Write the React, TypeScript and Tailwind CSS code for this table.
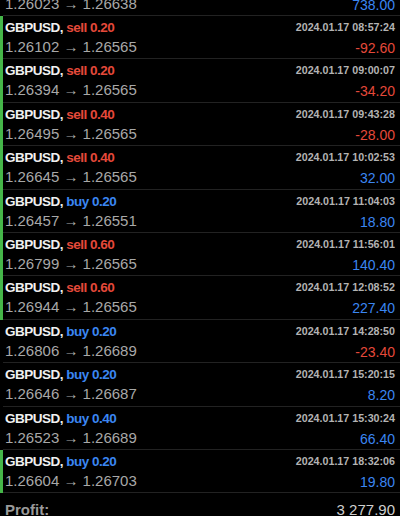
import React from "react";

type Row = {
  side: "buy" | "sell";
  vol: string;
  open: string;
  close: string;
  time: string;
  profit: string;
  green: boolean;
};

const rows: Row[] = [
  { side: "buy", vol: "1.20", open: "1.26023", close: "1.26638", time: "2024.01.17 08:40:11", profit: "738.00", green: false },
  { side: "sell", vol: "0.20", open: "1.26102", close: "1.26565", time: "2024.01.17 08:57:24", profit: "-92.60", green: true },
  { side: "sell", vol: "0.20", open: "1.26394", close: "1.26565", time: "2024.01.17 09:00:07", profit: "-34.20", green: true },
  { side: "sell", vol: "0.40", open: "1.26495", close: "1.26565", time: "2024.01.17 09:43:28", profit: "-28.00", green: true },
  { side: "sell", vol: "0.40", open: "1.26645", close: "1.26565", time: "2024.01.17 10:02:53", profit: "32.00", green: true },
  { side: "buy", vol: "0.20", open: "1.26457", close: "1.26551", time: "2024.01.17 11:04:03", profit: "18.80", green: true },
  { side: "sell", vol: "0.60", open: "1.26799", close: "1.26565", time: "2024.01.17 11:56:01", profit: "140.40", green: true },
  { side: "sell", vol: "0.60", open: "1.26944", close: "1.26565", time: "2024.01.17 12:08:52", profit: "227.40", green: true },
  { side: "buy", vol: "0.20", open: "1.26806", close: "1.26689", time: "2024.01.17 14:28:50", profit: "-23.40", green: false },
  { side: "buy", vol: "0.20", open: "1.26646", close: "1.26687", time: "2024.01.17 15:20:15", profit: "8.20", green: false },
  { side: "buy", vol: "0.40", open: "1.26523", close: "1.26689", time: "2024.01.17 15:30:24", profit: "66.40", green: false },
  { side: "buy", vol: "0.20", open: "1.26604", close: "1.26703", time: "2024.01.17 18:32:06", profit: "19.80", green: true },
];

function TradeRow({ r }: { r: Row }) {
  const sideColor = r.side === "sell" ? "text-[#e5493a]" : "text-[#3b86f2]";
  const profitColor = r.profit.startsWith("-") ? "text-[#e5493a]" : "text-[#3b86f2]";
  return (
    <div className="flex h-[43.4px]">
      <div className={r.green ? "w-[3px] bg-[#45b649]" : "w-[3px]"} />
      <div className="flex flex-1 justify-between border-b border-[#222222] pl-[2px] pr-[5px]">
        <div className="flex flex-col pt-[3px]">
          <div className="h-[18px] text-[13.5px] leading-[18px] font-bold tracking-[-0.5px] whitespace-nowrap">
            <span className="text-[#f0f0f0]">GBPUSD, </span>
            <span className={sideColor}>
              {r.side} {r.vol}
            </span>
          </div>
          <div className="h-[20px] text-[15px] leading-[20px] text-[#a8a8a8] whitespace-nowrap">
            {r.open} → {r.close}
          </div>
        </div>
        <div className="flex flex-col items-end pt-[2px]">
          <div className="h-[18px] text-[10.7px] leading-[18px] font-bold text-[#b3b3b3] whitespace-nowrap">
            {r.time}
          </div>
          <div className={`mt-[2px] h-[20px] text-[14px] leading-[20px] whitespace-nowrap ${profitColor}`}>
            {r.profit}
          </div>
        </div>
      </div>
    </div>
  );
}

export default function App() {
  return (
    <div
      className="h-[516px] w-[400px] overflow-hidden bg-black"
      style={{ fontFamily: '"Liberation Sans", Arial, sans-serif' }}
    >
      <div className="mt-[-27.4px]">
        {rows.map((r, i) => (
          <TradeRow key={i} r={r} />
        ))}
      </div>
      <div className="flex justify-between pl-[5px] pr-[5px] pt-[7px]">
        <div className="text-[15px] leading-[20px] font-bold text-[#9a9a9a]">Profit:</div>
        <div className="text-[15px] leading-[20px] text-[#cfcfcf]">3 277.90</div>
      </div>
    </div>
  );
}
